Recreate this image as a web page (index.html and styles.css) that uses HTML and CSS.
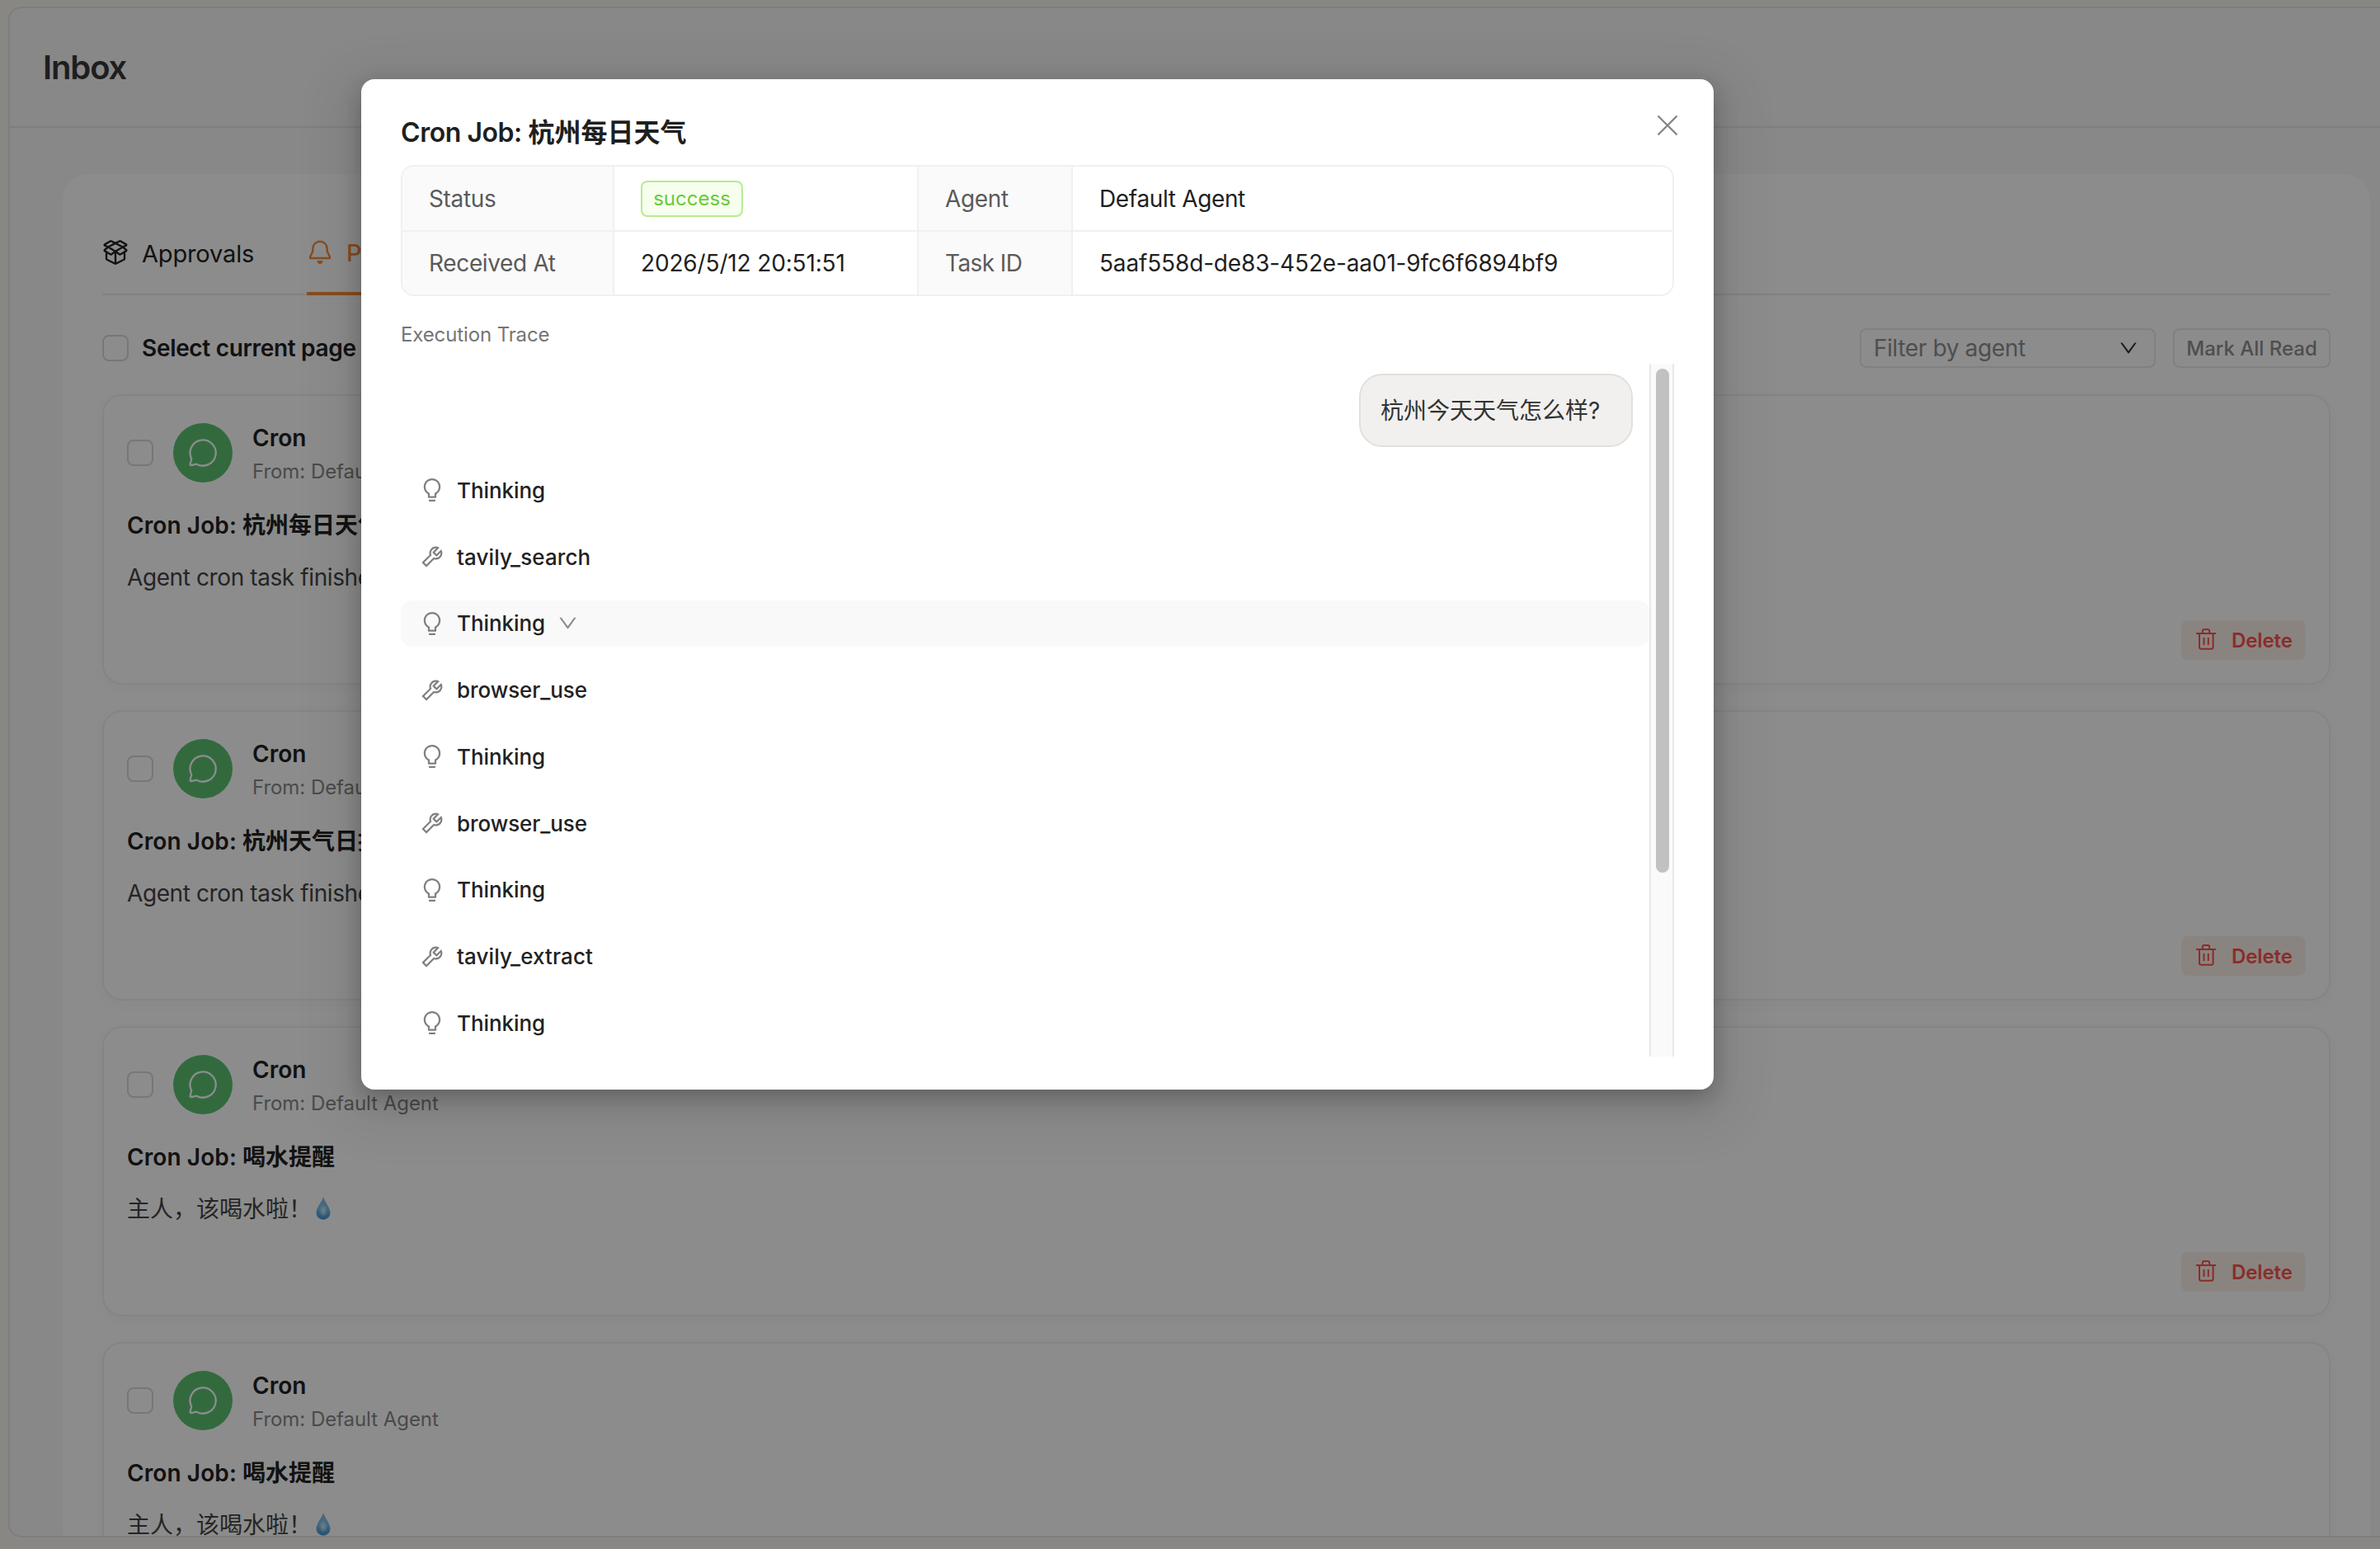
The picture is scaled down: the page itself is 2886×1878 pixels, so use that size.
FILE: index.html
```
<!DOCTYPE html>
<html lang="en">
<head>
<meta charset="utf-8">
<title>Inbox</title>
<link rel="stylesheet" href="styles.css">
</head>
<body>
<svg class="sprite" aria-hidden="true">
  <defs>
    <linearGradient id="drop-fill" x1="0" y1="0" x2="0" y2="1">
      <stop offset="0" stop-color="#8fb6cf"/>
      <stop offset="0.5" stop-color="#79c0ee"/>
      <stop offset="1" stop-color="#3f92d2"/>
    </linearGradient>
    <radialGradient id="drop-shine" cx="0.5" cy="0.55" r="0.5">
      <stop offset="0" stop-color="#cfeaf8"/>
      <stop offset="1" stop-color="#cfeaf8" stop-opacity="0"/>
    </radialGradient>
  </defs>
  <symbol id="i-box" viewBox="0 0 32 32"><g fill="none" stroke="currentColor" stroke-width="2.4" stroke-linejoin="round" stroke-linecap="round"><path d="M16 4.9 24.8 9.5 16 14.8 7.2 9.5Z"/><path d="M7.2 9.5 3 7.6Q2.2 7 3 6.4L9.6 2.5Q10.4 2.1 11.2 2.5L16 4.9 20.8 2.5Q21.6 2.1 22.4 2.5L29 6.4Q29.8 7 29 7.6L24.8 9.5"/><path d="M7.2 9.5 3 12.9Q2.2 13.7 3.1 14.4L9.8 18.3Q10.5 18.7 11.2 18.2L16 14.8 20.8 18.2Q21.5 18.7 22.2 18.3L28.9 14.4Q29.8 13.7 29 12.9L24.8 9.5"/><path d="M5 17.5V23.6Q5 24.3 5.7 24.7L15.2 29.5Q16 29.9 16.8 29.5L26.3 24.7Q27 24.3 27 23.6V17.5M16 15V29.5"/></g></symbol>
  <symbol id="i-bell" viewBox="0 0 32 32"><g fill="none" stroke="currentColor" stroke-width="2.4" stroke-linejoin="round" stroke-linecap="round"><path d="M7.3 11.4a8.7 8.7 0 0 1 17.4 0V14.6L27.9 21.4Q28.5 23 27 23H5Q3.5 23 4.1 21.4L7.3 14.6Z"/><path d="M13.7 27.3Q16 30.6 18.3 27.3Z"/></g></symbol>
  <symbol id="i-msg" viewBox="0 0 40 40"><path fill="none" stroke="currentColor" stroke-width="2.3" stroke-linejoin="round" d="M6.2 27.2A15.6 15.6 0 1 1 12.5 33.7L6.2 35Q4.3 35.2 4.7 33.3Z"/></symbol>
  <symbol id="i-trash" viewBox="0 0 30 30"><g fill="none" stroke="currentColor" stroke-width="2"><path d="M3 8H27M7 8V24.6Q7 26.8 9.2 26.8H21.4Q23.6 26.8 23.6 24.6V8M10.8 8V5.2Q10.8 3 13 3H17Q19.2 3 19.2 5.2V8M12.5 13V22M17.8 13V22"/></g></symbol>
  <symbol id="i-down" viewBox="0 0 1024 1024"><path fill="currentColor" d="M884 256h-75c-5.1 0-9.9 2.5-12.9 6.6L512 654.2 227.9 262.6c-3-4.1-7.8-6.6-12.9-6.6h-75c-6.5 0-10.3 7.4-6.5 12.7l352.6 486.1c12.8 17.6 39 17.6 51.7 0l352.6-486.1c3.9-5.3.1-12.7-6.4-12.7z"/></symbol>
  <symbol id="i-bulb" viewBox="0 0 1024 1024"><path fill="currentColor" d="M632 888H392c-4.4 0-8 3.6-8 8v32c0 17.7 14.3 32 32 32h192c17.7 0 32-14.3 32-32v-32c0-4.4-3.6-8-8-8zM512 64c-181.1 0-328 146.9-328 328 0 121.4 66 227.4 164 284.1V792c0 17.7 14.3 32 32 32h264c17.7 0 32-14.3 32-32V676.1c98-56.7 164-162.7 164-284.1 0-181.1-146.9-328-328-328zm127.9 549.8L604 634.6V752H420V634.6l-35.9-20.8C305.4 568.3 256 484.5 256 392c0-141.4 114.6-256 256-256s256 114.6 256 256c0 92.5-49.4 176.3-128.1 221.8z"/></symbol>
  <symbol id="i-tool" viewBox="0 0 1024 1024"><path fill="currentColor" d="M876.6 239.5c-.5-.9-1.2-1.8-2-2.5-5-5-13.1-5-18.1 0L684.2 409.3l-67.9-67.9L788.7 169c.8-.8 1.4-1.6 2-2.5 3.6-6.1 1.6-13.9-4.5-17.5-98.2-58-226.8-44.7-311.3 39.7-67 67-89.2 162-66.5 247.4l-293 293c-3 3-2.8 7.9.3 11l169.7 169.7c3.1 3.1 8.1 3.3 11 .3l292.9-292.9c85.5 22.8 180.5.7 247.6-66.4 84.4-84.5 97.7-213.1 39.7-311.3zM786 499.8c-58.1 58.1-145.3 69.3-214.6 33.6l-8.8 8.8-.1-.1-274 274.1-79.2-79.2 230.1-230.1s0 .1.1.1l52.8-52.8c-35.7-69.3-24.5-156.5 33.6-214.6a184.2 184.2 0 0 1 144-53.5L537 318.9a32.05 32.05 0 0 0 0 45.3l124.5 124.5a32.05 32.05 0 0 0 45.3 0l132.8-132.8c3.7 51.8-14.4 104.8-53.6 143.9z"/></symbol>
  <symbol id="i-drop" viewBox="0 0 28 28"><path fill="url(#drop-fill)" d="M14 0C15.5 6 22.5 13 22.5 19.5A8.5 8.3 0 0 1 5.5 19.5C5.5 13 12.5 6 14 0Z"/><ellipse cx="14" cy="16" rx="5" ry="8" fill="url(#drop-shine)"/></symbol>
</svg>

<div class="page">
  <header class="page-header"><h1>Inbox</h1></header>
  <main class="card">
    <nav class="tabs">
      <a class="tab"><svg><use href="#i-box"/></svg><span>Approvals</span></a>
      <a class="tab active"><svg><use href="#i-bell"/></svg><span>Push</span></a>
    </nav>
    <div class="toolbar">
      <span class="checkbox"></span><span class="select-all">Select current page</span>
      <div class="select"><span>Filter by agent</span><svg class="chev"><use href="#i-down"/></svg></div>
      <button class="btn-read">Mark All Read</button>
    </div>
    <section class="list">
      <article class="item">
        <div class="item-head"><span class="checkbox"></span><span class="avatar"><svg><use href="#i-msg"/></svg></span>
          <div class="meta"><div class="who">Cron</div><div class="from">From: Default Agent</div></div></div>
        <h3><span class="latin">Cron Job: </span>杭州每日天气</h3>
        <p>Agent cron task finished</p>
        <button class="delete"><svg><use href="#i-trash"/></svg><span>Delete</span></button>
      </article>
      <article class="item">
        <div class="item-head"><span class="checkbox"></span><span class="avatar"><svg><use href="#i-msg"/></svg></span>
          <div class="meta"><div class="who">Cron</div><div class="from">From: Default Agent</div></div></div>
        <h3><span class="latin">Cron Job: </span>杭州天气日报</h3>
        <p>Agent cron task finished</p>
        <button class="delete"><svg><use href="#i-trash"/></svg><span>Delete</span></button>
      </article>
      <article class="item">
        <div class="item-head"><span class="checkbox"></span><span class="avatar"><svg><use href="#i-msg"/></svg></span>
          <div class="meta"><div class="who">Cron</div><div class="from">From: Default Agent</div></div></div>
        <h3><span class="latin">Cron Job: </span>喝水提醒</h3>
        <p class="cjk">主人，该喝水啦！<svg class="drop"><use href="#i-drop"/></svg></p>
        <button class="delete"><svg><use href="#i-trash"/></svg><span>Delete</span></button>
      </article>
      <article class="item">
        <div class="item-head"><span class="checkbox"></span><span class="avatar"><svg><use href="#i-msg"/></svg></span>
          <div class="meta"><div class="who">Cron</div><div class="from">From: Default Agent</div></div></div>
        <h3><span class="latin">Cron Job: </span>喝水提醒</h3>
        <p class="cjk">主人，该喝水啦！<svg class="drop"><use href="#i-drop"/></svg></p>
      </article>
    </section>
  </main>
</div>

<div class="mask">
  <div class="modal" role="dialog">
    <div class="modal-head">
      <h2><span class="latin">Cron Job: </span>杭州每日天气</h2>
      <svg class="close" viewBox="0 0 26 26"><path d="M1.5 1.5 24.5 24.5M24.5 1.5 1.5 24.5" stroke="currentColor" stroke-width="2.3"/></svg>
    </div>
    <dl class="desc">
      <dt>Status</dt><dd><span class="tag">success</span></dd>
      <dt>Agent</dt><dd>Default Agent</dd>
      <dt>Received At</dt><dd class="num">2026/5/12 20:51:51</dd>
      <dt class="task">Task ID</dt><dd class="num">5aaf558d-de83-452e-aa01-9fc6f6894bf9</dd>
    </dl>
    <div class="section-label">Execution Trace</div>
    <div class="trace">
      <div class="trace-body">
        <div class="bubble">杭州今天天气怎么样?</div>
        <ul class="steps">
          <li><svg><use href="#i-bulb"/></svg><span>Thinking</span></li>
          <li><svg><use href="#i-tool"/></svg><span class="fn">tavily_search</span></li>
          <li class="hover"><svg><use href="#i-bulb"/></svg><span>Thinking</span><svg class="chev"><use href="#i-down"/></svg></li>
          <li><svg><use href="#i-tool"/></svg><span>browser_use</span></li>
          <li><svg><use href="#i-bulb"/></svg><span>Thinking</span></li>
          <li><svg><use href="#i-tool"/></svg><span>browser_use</span></li>
          <li><svg><use href="#i-bulb"/></svg><span>Thinking</span></li>
          <li><svg><use href="#i-tool"/></svg><span class="fn">tavily_extract</span></li>
          <li><svg><use href="#i-bulb"/></svg><span>Thinking</span></li>
        </ul>
      </div>
      <div class="track"><div class="thumb"></div></div>
    </div>
  </div>
</div>
</body>
</html>
```
FILE: styles.css
```
* { box-sizing: border-box; margin: 0; padding: 0; }
html, body { width: 2886px; height: 1878px; overflow: hidden; }
body {
  background: #faf6f1;
  font-family: Inter, "Noto Sans CJK SC", sans-serif;
  font-size: 28px;
  line-height: 44px;
  color: #222;
  padding: 8px 0 0 10px;
}
svg { display: block; flex: none; }
button { font: inherit; border: 0; background: none; }
.sprite { position: absolute; width: 0; height: 0; }
.latin { white-space: pre; }

.page {
  width: 2930px;
  height: 1856px;
  border: 2px solid #e6e6e6;
  border-radius: 16px;
  background: #f8f8f8;
  overflow: hidden;
}
.page-header {
  height: 145px;
  padding: 0 0 0 40px;
  border-bottom: 2px solid #e6e6e6;
  display: flex;
  align-items: center;
}
h1 { font-size: 40px; font-weight: 600; color: #383838; letter-spacing: -1.1px; }
.card {
  margin: 56px 0 0 64px;
  width: 2798px;
  height: 1800px;
  padding: 48px;
  background: #fff;
  border-radius: 32px;
}
.tabs { display: flex; gap: 64px; height: 99px; border-bottom: 2px solid #ececec; }
.tab { display: flex; align-items: center; gap: 16px; height: 99px; width: 184px; font-size: 29px; letter-spacing: -0.15px; padding-bottom: 2px; }
.tab svg { width: 32px; height: 32px; margin-top: -3px; }
.tab.active { color: #f88b38; font-weight: 500; border-bottom: 4px solid #f88b38; padding-bottom: 0; }
.tab.active svg { margin-top: -1px; }

.toolbar { display: flex; align-items: center; height: 48px; margin-top: 40px; }
.checkbox { width: 32px; height: 32px; border: 2px solid #d9d9d9; border-radius: 8px; flex: none; }
.select-all { margin-left: 16px; font-weight: 600; letter-spacing: -0.32px; }
.select, .btn-read { height: 48px; border: 2px solid #e9e9e9; border-radius: 8px; display: flex; align-items: center; color: #8f8f8f; }
.select { width: 359px; margin-left: auto; padding: 0 18px 0 15px; justify-content: space-between; letter-spacing: -0.35px; }
.chev { width: 26px; height: 26px; color: #333; }
.btn-read { width: 191px; margin-left: 21px; padding-top: 1px; justify-content: center; font-size: 24px; font-weight: 500; }

.list { margin-top: 32px; display: flex; flex-direction: column; gap: 31px; }
.item { height: 352px; border: 2px solid #f0f0f0; border-radius: 24px; padding: 28px; display: flex; flex-direction: column; flex: none; box-shadow: 0 4px 16px rgba(0, 0, 0, 0.03); }
.item-head { display: flex; align-items: center; height: 82px; }
.avatar { width: 72px; height: 72px; margin: 0 24px; border-radius: 50%; background: #5bc272; color: #fff; display: flex; align-items: center; justify-content: center; }
.avatar svg { width: 40px; height: 40px; }
.meta { padding-top: 1px; }
.who { font-weight: 600; }
.from { font-size: 24px; line-height: 38px; color: #888; letter-spacing: -0.05px; }
h3 { font-size: 28px; font-weight: 600; margin-top: 25px; }
h3 .latin { letter-spacing: 0.1px; }
p { color: #444; margin-top: 19px; display: flex; align-items: center; letter-spacing: -0.4px; }
p.cjk { letter-spacing: 0; }
.drop { width: 28px; height: 28px; margin-top: -2px; }
.delete { margin: auto 0 0 auto; width: 151px; height: 48px; flex: none; border-radius: 8px; background: #fbf0ec; color: #fb524c; font-size: 24px; font-weight: 600; letter-spacing: -0.1px; display: flex; align-items: center; padding: 1px 0 0 15px; gap: 16px; }
.delete svg { width: 30px; height: 30px; margin-top: -3px; }

.mask { position: absolute; inset: 0; background: rgba(0, 0, 0, 0.45); }
.modal {
  margin: 96px 0 0 438px;
  width: 1640px;
  height: 1225px;
  padding: 42px 48px 40px;
  background: #fff;
  border-radius: 16px;
  box-shadow: 0 12px 32px rgba(0, 0, 0, 0.16), 0 6px 24px -8px rgba(0, 0, 0, 0.24), 0 18px 56px 32px rgba(0, 0, 0, 0.06);
}
.modal-head { display: flex; justify-content: space-between; height: 62px; }
h2 { font-size: 32px; line-height: 46px; font-weight: 600; color: #1f1f1f; }
h2 .latin { letter-spacing: -0.45px; }
.close { width: 26px; height: 26px; color: #868686; margin-right: -5px; margin-top: 1px; }
.desc {
  display: grid;
  grid-template-columns: 257px 369px 187px 727px;
  grid-template-rows: 79px 76px;
  border: 2px solid #f0f0f0;
  border-radius: 16px;
  overflow: hidden;
  height: 159px;
  letter-spacing: -0.35px;
}
.desc dt, .desc dd { display: flex; align-items: center; padding-left: 32px; border-right: 2px solid #f0f0f0; color: #1f1f1f; }
.desc dt { background: #fafafa; color: #5a5a5a; }
.desc .num { letter-spacing: -0.15px; }
.desc .task { letter-spacing: -0.6px; }
.desc > :nth-child(4n) { border-right: 0; }
.desc > :nth-child(-n+4) { border-bottom: 2px solid #f0f0f0; padding-top: 1px; }
.tag { height: 44px; width: 124px; border: 2px solid #b7eb8f; border-radius: 8px; background: #f6ffed; color: #6cc93c; font-size: 24px; letter-spacing: 0; display: flex; align-items: center; justify-content: center; }
.section-label { margin-top: 27px; height: 40px; line-height: 40px; font-size: 24px; color: #757575; letter-spacing: -0.12px; }
.trace { display: flex; height: 840px; margin-top: 15px; overflow: hidden; }
.trace-body { flex: 1; display: flex; flex-direction: column; padding-top: 12px; }
.bubble { align-self: flex-end; width: 332px; height: 89px; margin-right: 20px; padding-left: 24px; border: 2px solid #e2e0de; border-radius: 28px; background: #f1f0ee; color: #333; display: flex; align-items: center; }
.steps { list-style: none; margin-top: 24px; display: flex; flex-direction: column; gap: 24px; }
.steps li { height: 56.75px; flex: none; border-radius: 14px; padding-left: 22px; display: flex; align-items: center; gap: 14px; font-size: 26px; font-weight: 500; letter-spacing: -0.08px; color: #222; }
.steps span { padding-top: 1px; }
.steps .fn { letter-spacing: 0.1px; }
.steps svg { width: 32px; height: 32px; color: #808080; }
.steps .chev { width: 27px; height: 27px; color: #8c8c8c; }
.steps .hover { background: #f9f9f9; }
.track { width: 30px; flex: none; background: #fafafa; border: solid #e8e8e8; border-width: 0 2px; padding: 6px; }
.thumb { width: 16px; height: 611px; border-radius: 8px; background: #c1c1c1; }
```
